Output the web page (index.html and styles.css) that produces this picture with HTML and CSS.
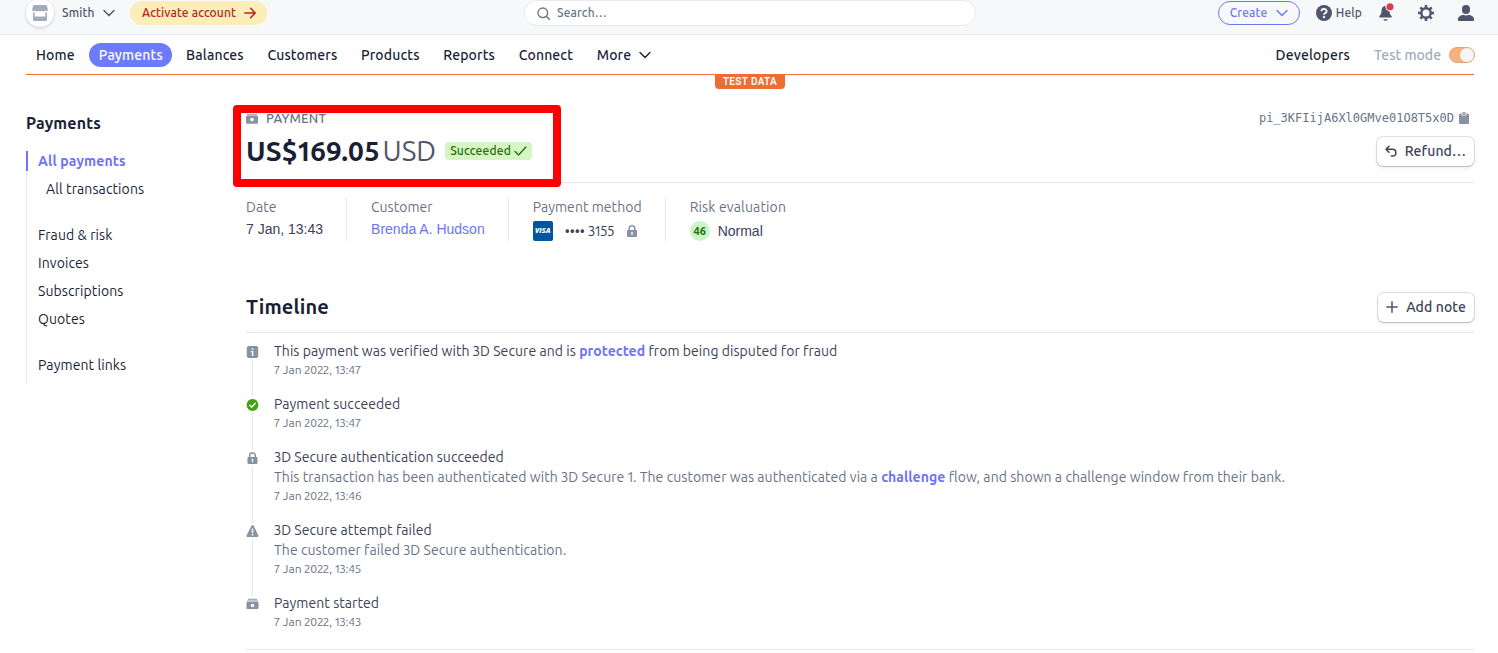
FILE: index.html
```html
<!DOCTYPE html>
<html lang="en">
<head>
<meta charset="utf-8">
<title>Payment</title>
<link rel="stylesheet" href="styles.css">
</head>
<body>
<header class="topbar">
  <div class="account">
    <span class="store"><svg width="16" height="16" viewBox="0 0 16 16" fill="#a3acb9"><path d="M1.6 0h12.8L16 4.6a2 2 0 0 1-3.2 1.2 2.4 2.4 0 0 1-3.2 0 2.4 2.4 0 0 1-3.2 0 2.4 2.4 0 0 1-3.2 0A2 2 0 0 1 0 4.6z"/><path d="M1 7.4a4 4 0 0 0 1.600-.2V11.500h10.800V7.200a4 4 0 0 0 1.600.2V15a1 1 0 0 1-1 1H2a1 1 0 0 1-1-1z"/></svg></span>
    <span class="smith">Smith</span>
    <svg class="chev" width="12" height="8" viewBox="0 0 12 8" fill="none" stroke="#4f566b" stroke-width="1.500" stroke-linecap="round" stroke-linejoin="round"><path d="M1 1.500l5 5 5-5"/></svg>
    <span class="activate"><span>Activate account</span><svg width="12" height="12" viewBox="0 0 12 12" fill="none" stroke="#b3261a" stroke-width="1.500" stroke-linecap="round" stroke-linejoin="round"><path d="M.8 6h10.400M6.600 1.200L11.200 6l-4.600 4.800"/></svg></span>
  </div>
  <div class="search"><svg width="13" height="13" viewBox="0 0 13 13" fill="none" stroke="#697386" stroke-width="1.400" stroke-linecap="round"><circle cx="5.800" cy="5.800" r="4.800"/><path d="M9.300 9.300l3 3"/></svg><span>Search…</span></div>
  <div class="tools">
    <span class="create"><span>Create</span><svg width="12" height="8" viewBox="0 0 12 8" fill="none" stroke="#6c78f5" stroke-width="1.400" stroke-linecap="round" stroke-linejoin="round"><path d="M1 1.500l5 5 5-5"/></svg></span>
    <svg class="i-help" width="16" height="16" viewBox="0 0 16 16"><circle cx="8" cy="8" r="8" fill="#4f566b"/><path d="M5.500 6.200a2.500 2.300 0 1 1 3.700 2c-.8.500-1.200.7-1.200 1.500" fill="none" stroke="#f7f8fa" stroke-width="1.900"/><circle cx="8" cy="12" r="1.200" fill="#f7f8fa"/></svg>
    <span class="help">Help</span>
    <svg class="i-bell" width="16" height="18" viewBox="0 0 16 18"><path fill="#4f566b" d="M6 1.800c-2.200.5-3.500 2.500-3.500 4.800 0 2.500-.3 3.600-1.300 4.600-.6.600-1 1-1 1.600 0 .5.300.8.800.8h11c.500 0 .8-.3.800-.8 0-.6-.4-1-1-1.600-1-1-1.300-2.100-1.300-4.600zM4.300 15.200h4.400a2.300 2.300 0 0 1-4.400 0z"/><circle cx="11" cy="2.800" r="4.600" fill="#f6f8fa"/><circle cx="11" cy="2.800" r="3.500" fill="#df3a44"/></svg>
    <svg class="i-gear" width="16" height="16" viewBox="0 0 16 16" fill="none" stroke="#4f566b"><circle cx="8" cy="8" r="4.700" stroke-width="2.400"/><path stroke-width="2.600" d="M8 0v3M8 13v3M0 8h3M13 8h3M2.350 2.350l2 2M11.650 11.650l2 2M2.350 13.650l2-2M11.650 4.350l2-2"/></svg>
    <svg class="i-user" width="16" height="16" viewBox="0 0 16 16" fill="#4f566b"><rect x="4" y="0" width="8" height="9" rx="4"/><path d="M0 14c0-2 2-3.200 5-4.200 1.800.9 4.200.9 6 0 3 1 5 2.200 5 4.200v1.200a.8.8 0 0 1-.8.8H.8a.8.8 0 0 1-.8-.8z"/></svg>
  </div>
</header>
<nav class="nav">
  <div class="links">
    <a>Home</a><a class="active">Payments</a><a>Balances</a><a>Customers</a><a>Products</a><a>Reports</a><a>Connect</a><a>More</a>
    <svg class="more" width="12" height="8" viewBox="0 0 12 8" fill="none" stroke="#1a1f36" stroke-width="1.400" stroke-linecap="round" stroke-linejoin="round"><path d="M1 1.500l5 5 5-5"/></svg>
  </div>
  <div class="right"><a class="dev">Developers</a><span class="tm">Test mode</span><span class="toggle"></span></div>
  <span class="tag">TEST DATA</span>
</nav>
<div class="page">
  <aside class="side">
    <h2>Payments</h2>
    <ul>
      <li class="on">All payments</li>
      <li class="sub end">All transactions</li>
      <li>Fraud &amp; risk</li>
      <li>Invoices</li>
      <li>Subscriptions</li>
      <li class="end">Quotes</li>
      <li>Payment links</li>
    </ul>
  </aside>
  <main class="main">
    <section class="summary">
      <div class="row kicker">
        <span class="kind"><svg width="12" height="12" viewBox="0 0 12 12"><path fill="#a3acb9" d="M2 0h8v1H2zM1 2h10v1.500H1z"/><rect y="3.800" width="12" height="8" rx="1" fill="#8792a2"/><circle cx="6" cy="7.600" r="1.800" fill="#fff"/></svg><span>PAYMENT</span></span>
        <span class="pid"><span>pi_3KFIijA6Xl0GMve01O8T5x0D</span><svg width="10" height="12" viewBox="0 0 10 12"><path fill="#8792a2" d="M1 1.500h1.200C2.300 3 3 3.700 5 3.700S7.700 3 7.800 1.500H9a1 1 0 0 1 1 1V11a1 1 0 0 1-1 1H1a1 1 0 0 1-1-1V2.500a1 1 0 0 1 1-1z"/><path fill="#8792a2" d="M3.200 1.300a1.800 1.300 0 0 1 3.600 0v.8c0 .5-.3.800-.8.800H4c-.5 0-.8-.3-.8-.8z"/><circle cx="5" cy="1.300" r=".6" fill="#fff"/></svg></span>
      </div>
      <div class="row amount">
        <span class="total"><b>US$169.05</b><i>USD</i><span class="badge"><span>Succeeded</span><svg width="13" height="10" viewBox="0 0 13 10" fill="none" stroke="#217005" stroke-width="1.300" stroke-linecap="round" stroke-linejoin="round"><path d="M1 5.500l3.500 3.500L12 1"/></svg></span></span>
        <span class="btn refund"><svg width="12" height="12" viewBox="0 0 12 12" fill="none" stroke="#3c4257" stroke-width="1.500" stroke-linecap="round" stroke-linejoin="round"><path d="M4 1.300L1 4.300l3 3M1.200 4.300h6.300a3.300 3.300 0 0 1 0 6.700H6.300"/></svg><span>Refund…</span></span>
      </div>
    </section>
    <section class="facts">
      <dl><dt>Date</dt><dd class="arial">7 Jan, 13:43</dd></dl>
      <dl><dt>Customer</dt><dd class="arial link">Brenda A. Hudson</dd></dl>
      <dl><dt>Payment method</dt><dd class="pm"><span class="visa">VISA</span><span class="dots">••••</span><span class="last4">3155</span><svg width="10" height="12" viewBox="0 0 10 12"><path d="M2.200 5.500V3.600a2.800 2.800 0 0 1 5.600 0v1.900" fill="none" stroke="#8792a2" stroke-width="1.500"/><rect y="5" width="10" height="7" rx="1" fill="#8792a2"/><path d="M5 7.300v2.200" stroke="#fff" stroke-width="1.300" stroke-linecap="round"/></svg></dd></dl>
      <dl><dt>Risk evaluation</dt><dd class="risk"><span class="score">46</span><span class="arial">Normal</span></dd></dl>
    </section>
    <section class="timeline">
      <div class="row thead"><h1>Timeline</h1><span class="btn add"><svg width="12" height="12" viewBox="0 0 12 12" stroke="#4f566b" stroke-width="1.500" stroke-linecap="round"><path d="M6 .8v10.400M.8 6h10.400"/></svg><span>Add note</span></span></div>
      <ol>
        <li><span class="ico"><svg width="12" height="12" viewBox="-.5 0 12 12"><rect x=".3" width="11.400" height="12" rx="2" fill="#8792a2"/><path fill="#fff" d="M5.200 2.200h1.700v1.500H5.200zM4.300 4.900h2.600V10H5.400V6.200H4.300z"/></svg></span><div><p>This payment was verified with 3D Secure and is <b>protected</b> from being disputed for fraud</p><time>7 Jan 2022, 13:47</time></div></li>
        <li><span class="ico"><svg width="12" height="12" viewBox="-.5 0 12 12"><circle cx="6" cy="6" r="5.900" fill="#3fa40d"/><path d="M3.400 6.300l1.900 1.800 3.500-3.800" fill="none" stroke="#fff" stroke-width="1.500" stroke-linecap="round" stroke-linejoin="round"/></svg></span><div><p>Payment succeeded</p><time>7 Jan 2022, 13:47</time></div></li>
        <li><span class="ico"><svg width="12" height="12" viewBox="-.5 0 12 12"><path d="M3.200 5.500V3.600a2.800 2.800 0 0 1 5.600 0v1.900" fill="none" stroke="#8792a2" stroke-width="1.500"/><rect x="1" y="5" width="10" height="7" rx="1" fill="#8792a2"/><path d="M6 7.300v2.200" stroke="#fff" stroke-width="1.300" stroke-linecap="round"/></svg></span><div><p>3D Secure authentication succeeded</p><p class="desc">This transaction has been authenticated with 3D Secure 1. The customer was authenticated via a <b>challenge</b> flow, and shown a challenge window from their bank.</p><time>7 Jan 2022, 13:46</time></div></li>
        <li><span class="ico"><svg width="12" height="12" viewBox="-.5 0 12 12"><path fill="#8792a2" d="M4.900.7a1.250 1.250 0 0 1 2.200 0l4.700 9.500A1.200 1.200 0 0 1 10.700 12H1.300A1.200 1.200 0 0 1 .2 10.200z"/><path d="M6 4v3.400" stroke="#fff" stroke-width="1.400" stroke-linecap="round"/><circle cx="6" cy="9.700" r=".9" fill="#fff"/></svg></span><div><p>3D Secure attempt failed</p><p class="desc">The customer failed 3D Secure authentication.</p><time>7 Jan 2022, 13:45</time></div></li>
        <li><span class="ico"><svg width="12" height="12" viewBox="-.5 0 12 12"><path fill="#8792a2" d="M1.500.800h9v1h-9zM.5 2.400h11v1.100H.5z"/><rect y="4" width="12" height="7" rx="1" fill="#8792a2"/><circle cx="6" cy="7.500" r="1.700" fill="#fff"/></svg></span><div><p>Payment started</p><time>7 Jan 2022, 13:43</time></div></li>
      </ol>
    </section>
  </main>
  <div class="highlight"></div>
</div>
</body>
</html>
```
FILE: styles.css
```css
* { box-sizing: border-box; margin: 0; padding: 0; }
body { height: 653px; overflow: hidden; background: #fff; color: #3c4257; font: 14px/20px Ubuntu, "Noto Sans", sans-serif; font-variant-numeric: proportional-nums; white-space: nowrap; }
svg { display: block; flex: none; overflow: visible; }
.topbar { height: 35px; padding: 0 24px 8px 26px; background: #f6f8fa; border-bottom: 1px solid #e8ebef; display: grid; grid-template: 26px / 498px 452px 1fr; align-items: center; font-size: 12px; font-weight: 500; color: #4f566b; letter-spacing: .14px; }
.topbar span { line-height: 18px; }
.account { display: flex; align-items: center; }
.store { width: 28px; height: 28px; margin-right: 8px; border-radius: 50%; background: #fff; box-shadow: 0 1px 3px rgba(60,66,87,.25); display: grid; place-items: center; }
.chev { margin-left: 8px; }
.activate { height: 24px; margin-left: 15.5px; padding: 0 11px 0 12px; border-radius: 12px; background: #fcedb9; color: #b3261a; display: flex; align-items: center; gap: 7.5px; }
.search { height: 26px; padding: 0 12px; border: 1px solid #e8ebef; border-radius: 13px; background: #fff; color: #697386; display: flex; align-items: center; gap: 7px; }
.tools { display: flex; align-items: center; justify-content: flex-end; }
.create { width: 82px; height: 24px; padding: 0 11px; border: 1px solid #6c78f5; border-radius: 12px; color: #6c78f5; display: flex; align-items: center; justify-content: space-between; }
.i-help { margin: 0 4px 0 16px; }
.i-bell { margin-left: 17px; }
.i-gear { margin-left: 23px; }
.i-user { margin-left: 24px; }
.nav { position: relative; height: 40px; margin: 0 24px 0 26px; border-bottom: 1px solid #ed6d34; display: flex; justify-content: space-between; align-items: center; font-weight: 500; color: #1a1f36; letter-spacing: .15px; }
.links { display: flex; align-items: center; padding-left: 1px; }
.links a { padding: 2px 9px; margin-right: 5.6px; border-radius: 12px; }
.links .active { padding: 2px 9.5px; margin-right: 4.6px; background: #6c7bfd; color: #fff; }
.more { margin-left: -7px; }
.right { display: flex; align-items: center; margin-right: -1px; }
.tm { margin: 0 8px 0 24px; color: #a3acb9; letter-spacing: 0; }
.toggle { width: 26px; height: 16px; border: 1px solid #e0a37c; border-radius: 8px; background: #f8b27d; display: flex; justify-content: flex-end; }
.toggle::after { content: ""; width: 14px; height: 14px; border-radius: 50%; background: #f5f6f8; }
.tag { position: absolute; left: 689px; top: 39px; width: 70px; height: 15px; border-radius: 0 0 4px 4px; background: #ed6d34; color: #fff; font: 600 10px/15px Roboto, sans-serif; letter-spacing: .35px; text-align: center; }
.page { position: relative; display: grid; grid-template-columns: 220px 1fr; padding: 0 24px 0 26px; }
.side { padding-top: 38px; color: #1a1f36; letter-spacing: .1px; }
.side h2 { font-size: 16px; line-height: 20px; margin-bottom: 18px; letter-spacing: .15px; }
.side ul { list-style: none; width: 180px; border-left: 1px solid #e3e8ee; display: flow-root; }
.side li { height: 20px; margin-bottom: 8px; padding-left: 11px; }
.side .sub { padding-left: 19px; }
.side .end { margin-bottom: 26px; }
.side .on { margin-left: -1px; padding-left: 10px; border-left: 2px solid #6c78f5; color: #6c72fb; font-weight: 700; letter-spacing: .15px; }
.row { display: flex; justify-content: space-between; align-items: center; }
.summary { height: 108px; padding-top: 33px; border-bottom: 1px solid #e3e8ee; }
.kicker { height: 20px; color: #697386; font-size: 12px; }
.kind { display: flex; align-items: center; gap: 8px; font-size: 13px; font-weight: 500; letter-spacing: .2px; }
.pid { display: flex; align-items: center; gap: 5px; padding-right: 5px; font-family: "DejaVu Sans Mono", monospace; }
.amount { height: 30px; margin-top: 8px; }
.total { display: flex; align-items: center; font-size: 28px; line-height: 30px; color: #1a1f36; }
.total b { letter-spacing: .15px; }
.total i { font-style: normal; color: #4f566b; margin-left: 3px; }
.badge { height: 18px; margin-left: 9px; padding: 0 5px; border-radius: 4px; background: #d7f5c3; color: #217005; display: flex; align-items: center; gap: 3px; font-size: 12px; font-weight: 500; letter-spacing: .2px; }
.btn { height: 29px; border-radius: 6px; background: #fff; box-shadow: 0 0 0 1px rgba(60,66,87,.16), 0 1px 1px rgba(0,0,0,.12), 0 2px 5px rgba(60,66,87,.08); display: flex; align-items: center; gap: 8px; padding: 0 8px; font-weight: 500; letter-spacing: .1px; }
.facts { display: flex; padding-top: 15px; height: 99px; }
.facts dl { height: 43px; padding-right: 23px; margin-right: 24px; border-right: 1px solid #e3e8ee; }
.facts dl:last-child { border: 0; }
.facts dt { color: #697386; height: 21px; margin-top: -1px; letter-spacing: .04px; }
.facts dl:last-child dt { letter-spacing: .15px; }
.facts dd { height: 22px; line-height: 22px; }
.arial { font-family: "Liberation Sans", sans-serif; }
.link { color: #6c72fb; }
.facts .pm, .facts .risk { display: flex; align-items: center; margin-top: 2px; }
.visa { width: 20px; height: 20px; border-radius: 2px; background: #0057a0; color: #fff; font: italic 800 7px/20px "Open Sans", sans-serif; text-align: center; margin-right: 12px; }
.last4 { margin: 0 13px 0 3px; }
.score { width: 20px; height: 20px; border-radius: 50%; background: #cbf4c9; color: #217005; font-size: 11px; line-height: 20px; font-weight: 700; text-align: center; margin-right: 8px; }
.thead { height: 51px; border-bottom: 1px solid #e3e8ee; }
.thead h1 { font-size: 20px; color: #1a1f36; letter-spacing: .15px; }
.timeline ol { list-style: none; padding: 8px 0 3px; border-bottom: 1px solid #e3e8ee; }
.timeline li { position: relative; display: flex; gap: 16px; padding-bottom: 15px; letter-spacing: .06px; }
.ico { padding-top: 5px; }
.timeline li:not(:last-child)::before { content: ""; position: absolute; left: 6px; top: 19px; bottom: -3px; width: 1px; background: #e3e8ee; }
.timeline b { color: #6c72fb; }
.desc { color: #697386; }
.timeline time { display: block; height: 18px; line-height: 17px; font-size: 12px; color: #697386; letter-spacing: .03px; }
.highlight { position: absolute; left: 233px; top: 30px; width: 328px; height: 82px; border: 8px solid #f00; border-radius: 4px; }
```
